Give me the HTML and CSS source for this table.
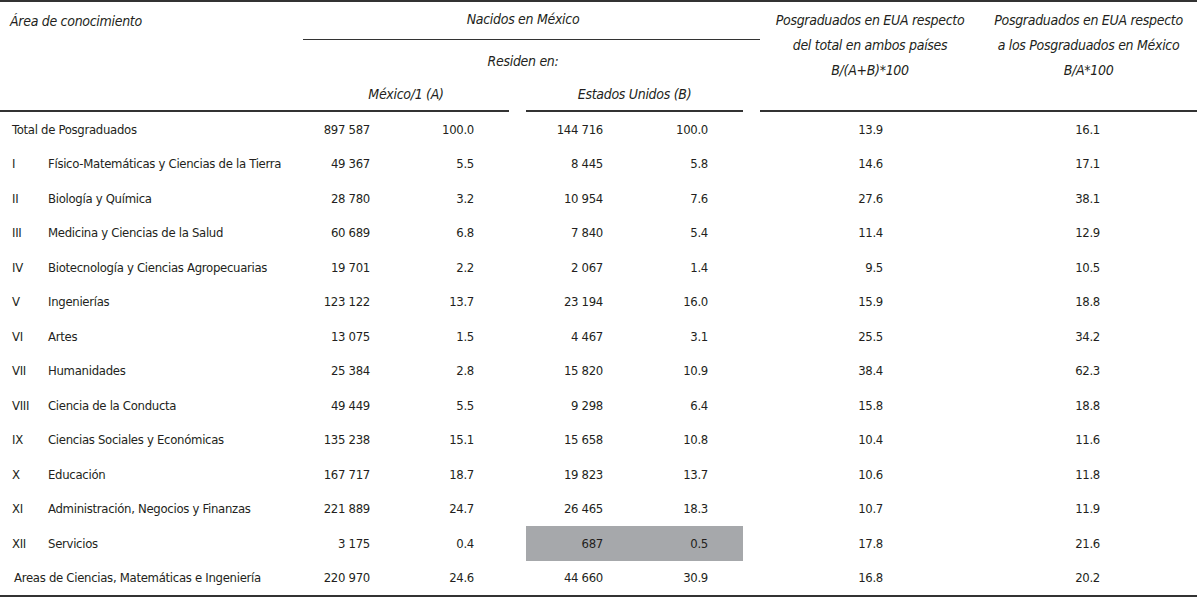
FILE: index.html
```html
<!DOCTYPE html>
<html lang="es">
<head>
<meta charset="utf-8">
<title>Posgraduados</title>
<link rel="stylesheet" href="styles.css">
</head>
<body>
<table class="tbl">
  <colgroup>
    <col class="c-area"><col class="c-mxn"><col class="c-mxp"><col class="c-gap"><col class="c-usn"><col class="c-usp"><col class="c-gap"><col class="c-r1"><col class="c-r2">
  </colgroup>
  <thead>
    <tr class="h1">
      <th rowspan="3" class="th-area">Área de conocimiento</th>
      <th colspan="5" class="th-nac">Nacidos en México</th>
      <th class="th-ext"></th>
      <th rowspan="3" class="th-ratio">Posgraduados en EUA respecto<br>del total en ambos países<br>B/(A+B)*100</th>
      <th rowspan="3" class="th-ratio">Posgraduados en EUA respecto<br>a los Posgraduados en México<br>B/A*100</th>
    </tr>
    <tr class="h2">
      <th colspan="5" class="th-res">Residen en:</th>
      <th></th>
    </tr>
    <tr class="h3">
      <th colspan="2" class="th-sub">México/1 (A)</th>
      <th></th>
      <th colspan="2" class="th-sub">Estados Unidos (B)</th>
      <th></th>
    </tr>
  </thead>
  <tbody>
    <tr><td class="lbl"><span class="total">Total de Posgraduados</span></td><td class="n1">897 587</td><td class="n2">100.0</td><td></td><td class="n3">144 716</td><td class="n4">100.0</td><td></td><td class="r">13.9</td><td class="r">16.1</td></tr>
    <tr><td class="lbl"><span class="rn">I</span><span>Físico-Matemáticas y Ciencias de la Tierra</span></td><td class="n1">49 367</td><td class="n2">5.5</td><td></td><td class="n3">8 445</td><td class="n4">5.8</td><td></td><td class="r">14.6</td><td class="r">17.1</td></tr>
    <tr><td class="lbl"><span class="rn">II</span><span>Biología y Química</span></td><td class="n1">28 780</td><td class="n2">3.2</td><td></td><td class="n3">10 954</td><td class="n4">7.6</td><td></td><td class="r">27.6</td><td class="r">38.1</td></tr>
    <tr><td class="lbl"><span class="rn">III</span><span>Medicina y Ciencias de la Salud</span></td><td class="n1">60 689</td><td class="n2">6.8</td><td></td><td class="n3">7 840</td><td class="n4">5.4</td><td></td><td class="r">11.4</td><td class="r">12.9</td></tr>
    <tr><td class="lbl"><span class="rn">IV</span><span>Biotecnología y Ciencias Agropecuarias</span></td><td class="n1">19 701</td><td class="n2">2.2</td><td></td><td class="n3">2 067</td><td class="n4">1.4</td><td></td><td class="r">9.5</td><td class="r">10.5</td></tr>
    <tr><td class="lbl"><span class="rn">V</span><span>Ingenierías</span></td><td class="n1">123 122</td><td class="n2">13.7</td><td></td><td class="n3">23 194</td><td class="n4">16.0</td><td></td><td class="r">15.9</td><td class="r">18.8</td></tr>
    <tr><td class="lbl"><span class="rn">VI</span><span>Artes</span></td><td class="n1">13 075</td><td class="n2">1.5</td><td></td><td class="n3">4 467</td><td class="n4">3.1</td><td></td><td class="r">25.5</td><td class="r">34.2</td></tr>
    <tr><td class="lbl"><span class="rn">VII</span><span>Humanidades</span></td><td class="n1">25 384</td><td class="n2">2.8</td><td></td><td class="n3">15 820</td><td class="n4">10.9</td><td></td><td class="r">38.4</td><td class="r">62.3</td></tr>
    <tr><td class="lbl"><span class="rn">VIII</span><span>Ciencia de la Conducta</span></td><td class="n1">49 449</td><td class="n2">5.5</td><td></td><td class="n3">9 298</td><td class="n4">6.4</td><td></td><td class="r">15.8</td><td class="r">18.8</td></tr>
    <tr><td class="lbl"><span class="rn">IX</span><span>Ciencias Sociales y Económicas</span></td><td class="n1">135 238</td><td class="n2">15.1</td><td></td><td class="n3">15 658</td><td class="n4">10.8</td><td></td><td class="r">10.4</td><td class="r">11.6</td></tr>
    <tr><td class="lbl"><span class="rn">X</span><span>Educación</span></td><td class="n1">167 717</td><td class="n2">18.7</td><td></td><td class="n3">19 823</td><td class="n4">13.7</td><td></td><td class="r">10.6</td><td class="r">11.8</td></tr>
    <tr><td class="lbl"><span class="rn">XI</span><span>Administración, Negocios y Finanzas</span></td><td class="n1">221 889</td><td class="n2">24.7</td><td></td><td class="n3">26 465</td><td class="n4">18.3</td><td></td><td class="r">10.7</td><td class="r">11.9</td></tr>
    <tr><td class="lbl"><span class="rn">XII</span><span>Servicios</span></td><td class="n1">3 175</td><td class="n2">0.4</td><td></td><td class="n3 hl">687</td><td class="n4 hl">0.5</td><td></td><td class="r">17.8</td><td class="r">21.6</td></tr>
    <tr><td class="lbl"><span class="areas">Areas de Ciencias, Matemáticas e Ingeniería</span></td><td class="n1">220 970</td><td class="n2">24.6</td><td></td><td class="n3">44 660</td><td class="n4">30.9</td><td></td><td class="r">16.8</td><td class="r">20.2</td></tr>
  </tbody>
</table>
</body>
</html>
```

FILE: styles.css
```css
html, body {
  margin: 0;
  padding: 0;
  background: #ffffff;
}

body {
  font-family: "DejaVu Sans Condensed", "DejaVu Sans", sans-serif;
  font-stretch: condensed;
  color: #231f20;
}

.tbl {
  width: 1197px;
  table-layout: fixed;
  border-collapse: separate;
  border-spacing: 0;
  border-top: 2px solid #333333;
  border-bottom: 2px solid #333333;
}

.c-area { width: 303px; }
.c-mxn { width: 97px; }
.c-mxp { width: 109px; }
.c-gap { width: 17px; }
.c-usn { width: 114px; }
.c-usp { width: 103px; }
.c-r1 { width: 220px; }
.c-r2 { width: 217px; }

th {
  font-weight: normal;
  font-style: italic;
  font-size: 14px;
  letter-spacing: -0.3px;
  line-height: 16px;
  padding: 0;
  text-align: center;
}

.h1 { height: 38px; }
.h2 { height: 38px; }
.h3 { height: 34px; }

.th-area {
  text-align: left;
  vertical-align: top;
  padding: 11px 0 0 10px;
  border-bottom: 2px solid #333333;
}

.th-nac {
  vertical-align: top;
  padding-top: 9px;
  border-bottom: 1.5px solid #333333;
}

.th-ext {
  border-bottom: 1.5px solid #333333;
}

.th-res {
  vertical-align: middle;
  padding-top: 4px;
}

.th-sub {
  vertical-align: top;
  padding-top: 8px;
  border-bottom: 2px solid #333333;
}

.th-ratio {
  vertical-align: top;
  line-height: 25px;
  padding-top: 6px;
  border-bottom: 2px solid #333333;
}

td {
  height: 34.5px;
  padding: 0;
  font-size: 13px;
  letter-spacing: -0.3px;
  vertical-align: middle;
  white-space: nowrap;
}

.lbl {
  padding-left: 12px;
}

.lbl .rn {
  display: inline-block;
  width: 36px;
}

.lbl .areas {
  padding-left: 2px;
}

.n1 { text-align: right; padding-right: 30px; }
.n2 { text-align: right; padding-right: 35px; }
.n3 { text-align: right; padding-right: 37px; }
.n4 { text-align: right; padding-right: 35px; }
.r { text-align: right; padding-right: 97px; }

.hl {
  background: #a6a8ab;
}
```
